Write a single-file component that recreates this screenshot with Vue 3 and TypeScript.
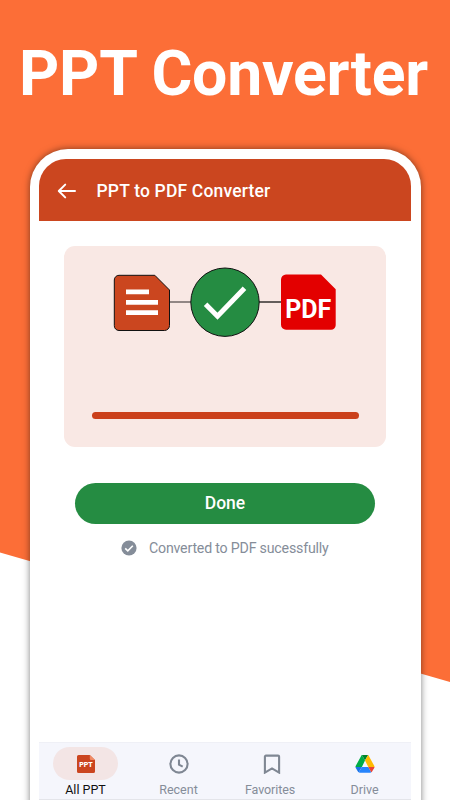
<template>
  <div class="page">
    <div class="backdrop"></div>
    <h1 class="headline">PPT Converter</h1>

    <div class="phone">
      <div class="screen">
        <header class="app-bar">
          <svg class="back" width="20" height="18" viewBox="0 0 20 18">
            <path d="M18 9H2M8.2 2.6 1.8 9l6.4 6.4" />
          </svg>
          <span class="app-title">PPT to PDF Converter</span>
        </header>

        <main class="content">
          <section class="card">
            <svg class="flow" width="322" height="80" viewBox="64 262 322 80">
              <path class="connector light" d="M169 302h23" />
              <path class="connector" d="M258 302h24" />
              <path
                class="doc"
                d="M119 275.3h35.8L169.5 290v35.5a5 5 0 0 1-5 5H119a4.7 4.7 0 0 1-4.7-5v-45.5a4.7 4.7 0 0 1 4.7-4.7z"
              />
              <path class="doc-lines" d="M126 291.8h23M126 302.4h32M126 312.6h32" />
              <circle class="done-circle" cx="225" cy="302.2" r="34.2" />
              <path class="done-check" d="M205.6 304.2l11.9 12 27-28" />
              <path
                class="pdf"
                d="M286 274.6h35l14.7 14.6v36a4.7 4.7 0 0 1-4.7 4.5h-45a5 5 0 0 1-5-5v-45a5 5 0 0 1 5-5.1z"
              />
              <text class="pdf-text" x="308.3" y="318">PDF</text>
            </svg>
            <div class="progress">
              <div class="progress-fill" :style="{ width: progress + '%' }"></div>
            </div>
          </section>

          <button class="done-button" type="button">Done</button>

          <p class="status">
            <svg width="16" height="16" viewBox="0 0 16 16">
              <circle cx="8" cy="8" r="7.6" fill="#858d99" />
              <path d="M4.2 8.4l2.6 2.5 5-5.2" fill="none" stroke="#fff" stroke-width="1.6" />
            </svg>
            <span>Converted to PDF sucessfully</span>
          </p>
        </main>

        <nav class="tabs">
          <div v-for="tab in tabs" :key="tab.id" class="tab" :class="[tab.id, { active: tab.id === activeTab }]">
            <div class="tab-icon">
              <svg v-if="tab.id === 'all'" width="20" height="20" viewBox="0 0 20 20">
                <path
                  d="M2.6 1h11.2L19 6v11.4a1.6 1.6 0 0 1-1.6 1.6H2.6A1.6 1.6 0 0 1 1 17.4V2.6A1.6 1.6 0 0 1 2.6 1z"
                  fill="#cb451f"
                />
                <path d="M13.8 1 19 6h-4a1.2 1.2 0 0 1-1.2-1.2z" fill="#f08a64" />
                <text class="ppt-text" x="10" y="12.8">PPT</text>
              </svg>
              <svg v-else-if="tab.id === 'recent'" class="line-icon" width="20" height="20" viewBox="0 0 20 20">
                <circle cx="10" cy="10" r="8.6" />
                <path d="M10 5.4v5.2l3.7 2" />
              </svg>
              <svg v-else-if="tab.id === 'favorites'" class="line-icon" width="20" height="20" viewBox="0 0 20 20">
                <path d="M2.9 2.6a1 1 0 0 1 1-1h12.2a1 1 0 0 1 1 1v16L10 14.4l-7.1 4.2z" />
              </svg>
              <svg v-else width="20" height="20" viewBox="0 0 20 20">
                <path d="M6.9 1.1h6.2L10 6.5z" fill="#00832d" />
                <path d="M6.9 1.1 10 6.5 6.9 12.9H.5a2 2 0 0 1 .3-1.1L6 2.2a2 2 0 0 1 .9-1.1z" fill="#00ac47" />
                <path d="M13.1 1.1 10 6.5l3.3 6.4h6.2a2 2 0 0 0-.3-1.1L14 2.2a2 2 0 0 0-.9-1.1z" fill="#ffba00" />
                <path d="M.5 12.9h6.4l-3.2 5.4a2 2 0 0 1-.8-.8L.8 14a2 2 0 0 1-.3-1.1z" fill="#1a73e8" />
                <path d="M6.9 12.9h6.4l3 5.4a2 2 0 0 1-1 .5H4.7a2 2 0 0 1-1-.5z" fill="#2684fc" />
                <path d="M13.3 12.9h6.2a2 2 0 0 1-.3 1.1l-2.1 3.5a2 2 0 0 1-.8.8z" fill="#ea4335" />
              </svg>
            </div>
            <span class="tab-label">{{ tab.label }}</span>
          </div>
        </nav>
      </div>
    </div>
  </div>
</template>

<script setup lang="ts">
import { ref } from 'vue'

interface Tab {
  id: 'all' | 'recent' | 'favorites' | 'drive'
  label: string
}

const tabs: Tab[] = [
  { id: 'all', label: 'All PPT' },
  { id: 'recent', label: 'Recent' },
  { id: 'favorites', label: 'Favorites' },
  { id: 'drive', label: 'Drive' }
]

const activeTab = ref<Tab['id']>('all')
const progress = ref(100)
</script>

<style>
body {
  margin: 0;
  background: #fff;
}
</style>

<style scoped>
.page {
  position: relative;
  width: 450px;
  height: 800px;
  overflow: hidden;
  font-family: Roboto, 'Liberation Sans', sans-serif;
  display: flex;
  flex-direction: column;
  align-items: center;
}

.backdrop {
  position: absolute;
  inset: 0;
  background: #fc6e37;
  clip-path: polygon(0 0, 100% 0, 100% 682px, 0 552.5px);
}

.headline {
  position: relative;
  flex: none;
  margin: 0;
  height: 149px;
  padding: 37px 3px 0 0;
  box-sizing: border-box;
  color: #fff;
  font-size: 62.5px;
  line-height: 74px;
  font-weight: 700;
  letter-spacing: -0.2px;
  white-space: nowrap;
}

.phone {
  position: relative;
  width: 391px;
  height: 700px;
  flex: none;
  box-sizing: border-box;
  padding: 9.5px 9.5px 0;
  border-radius: 38px 38px 0 0;
  background: #fff;
  box-shadow: 0 0 7px rgba(0, 0, 0, 0.5);
}

.screen {
  height: 641px;
  display: flex;
  flex-direction: column;
  overflow: hidden;
  border-radius: 27px 27px 0 0;
}

.app-bar {
  height: 62.8px;
  flex: none;
  box-sizing: border-box;
  display: flex;
  align-items: center;
  gap: 19.5px;
  padding: 1.5px 0 0 18px;
  background: #cb461f;
  color: #fff;
}

.back {
  fill: none;
  stroke: #fff;
  stroke-width: 2;
  stroke-linecap: round;
  stroke-linejoin: round;
}

.app-title {
  font-size: 17.5px;
  font-weight: 500;
  letter-spacing: 0.17px;
  white-space: nowrap;
}

.content {
  flex: 1;
  display: flex;
  flex-direction: column;
  align-items: center;
  padding-top: 25px;
}

.card {
  width: 322px;
  height: 201px;
  box-sizing: border-box;
  padding-top: 15.7px;
  border-radius: 11px;
  background: #f9e8e4;
}

.flow {
  display: block;
}

.connector {
  stroke: #000;
  stroke-width: 1.2;
}

.connector.light {
  stroke: #4d4646;
}

.doc {
  fill: #cb461f;
  stroke: #111;
  stroke-width: 1;
}

.doc-lines {
  stroke: #fff;
  stroke-width: 4.8;
}

.done-circle {
  fill: #258c42;
  stroke: #111;
  stroke-width: 1;
}

.done-check {
  fill: none;
  stroke: #fff;
  stroke-width: 5;
}

.pdf {
  fill: #e30000;
}

.pdf-text {
  fill: #fff;
  font-size: 25px;
  font-weight: 700;
  text-anchor: middle;
}

.progress {
  width: 267px;
  height: 6.5px;
  margin: 70.5px auto 0;
}

.progress-fill {
  height: 100%;
  border-radius: 4px;
  background: #cb401b;
}

.done-button {
  width: 300px;
  height: 41px;
  margin-top: 35.3px;
  padding: 0;
  border: 0;
  border-radius: 21px;
  background: #258c42;
  color: #fff;
  font-family: inherit;
  font-size: 17.5px;
  font-weight: 500;
}

.status {
  display: flex;
  align-items: center;
  gap: 11.5px;
  margin: 14.5px 0 0;
  height: 20px;
  color: #858d99;
  font-size: 14.2px;
  letter-spacing: -0.2px;
  line-height: 20px;
  white-space: nowrap;
}

.tabs {
  height: 58px;
  flex: none;
  box-sizing: border-box;
  display: grid;
  grid-template-columns: repeat(4, 1fr);
  background: #f5f6fc;
  border-top: 1px solid #eff0f6;
  border-bottom: 1px solid #e4e5ea;
}

.tab {
  display: flex;
  flex-direction: column;
  align-items: center;
  padding-top: 4.8px;
  color: #858d99;
}

.tab-icon {
  width: 65px;
  height: 33px;
  display: flex;
  align-items: center;
  justify-content: center;
  border-radius: 17px;
}

.active .tab-icon {
  background: #f3e5e5;
}

.tab-label {
  margin-top: 1.9px;
  font-size: 12.5px;
  line-height: 15px;
}

.favorites .tab-label {
  margin-right: 3px;
  letter-spacing: -0.1px;
}

.active .tab-label {
  color: #111;
}

.line-icon {
  fill: none;
  stroke: #7f8793;
  stroke-width: 2.1;
}

.ppt-text {
  fill: #fff;
  font-size: 7px;
  font-weight: 900;
  text-anchor: middle;
}
</style>
